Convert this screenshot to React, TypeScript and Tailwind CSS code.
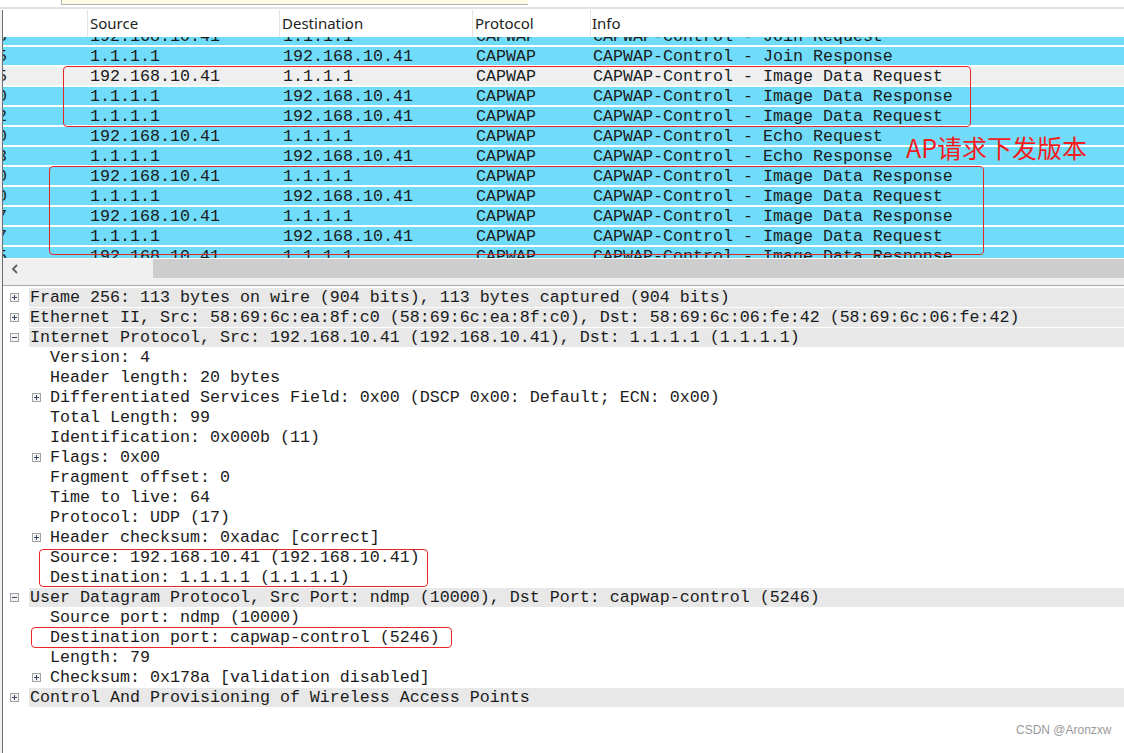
import React from "react";

type Pkt = { n: string; s: string; d: string; i: string; grey?: boolean };

const A = "192.168.10.41";
const B = "1.1.1.1";

const packets: Pkt[] = [
  { n: "5", s: A, d: B, i: "CAPWAP-Control - Join Request" },
  { n: "5", s: B, d: A, i: "CAPWAP-Control - Join Response" },
  { n: "5", s: A, d: B, i: "CAPWAP-Control - Image Data Request", grey: true },
  { n: "0", s: B, d: A, i: "CAPWAP-Control - Image Data Response" },
  { n: "2", s: B, d: A, i: "CAPWAP-Control - Image Data Request" },
  { n: "0", s: A, d: B, i: "CAPWAP-Control - Echo Request" },
  { n: "3", s: B, d: A, i: "CAPWAP-Control - Echo Response" },
  { n: "0", s: A, d: B, i: "CAPWAP-Control - Image Data Response" },
  { n: "0", s: B, d: A, i: "CAPWAP-Control - Image Data Request" },
  { n: "7", s: A, d: B, i: "CAPWAP-Control - Image Data Response" },
  { n: "7", s: B, d: A, i: "CAPWAP-Control - Image Data Request" },
  { n: "5", s: A, d: B, i: "CAPWAP-Control - Image Data Response" },
];

type Node = { text: string; level: 0 | 1; exp?: "plus" | "minus" };

const tree: Node[] = [
  { text: "Frame 256: 113 bytes on wire (904 bits), 113 bytes captured (904 bits)", level: 0, exp: "plus" },
  { text: "Ethernet II, Src: 58:69:6c:ea:8f:c0 (58:69:6c:ea:8f:c0), Dst: 58:69:6c:06:fe:42 (58:69:6c:06:fe:42)", level: 0, exp: "plus" },
  { text: "Internet Protocol, Src: 192.168.10.41 (192.168.10.41), Dst: 1.1.1.1 (1.1.1.1)", level: 0, exp: "minus" },
  { text: "Version: 4", level: 1 },
  { text: "Header length: 20 bytes", level: 1 },
  { text: "Differentiated Services Field: 0x00 (DSCP 0x00: Default; ECN: 0x00)", level: 1, exp: "plus" },
  { text: "Total Length: 99", level: 1 },
  { text: "Identification: 0x000b (11)", level: 1 },
  { text: "Flags: 0x00", level: 1, exp: "plus" },
  { text: "Fragment offset: 0", level: 1 },
  { text: "Time to live: 64", level: 1 },
  { text: "Protocol: UDP (17)", level: 1 },
  { text: "Header checksum: 0xadac [correct]", level: 1, exp: "plus" },
  { text: "Source: 192.168.10.41 (192.168.10.41)", level: 1 },
  { text: "Destination: 1.1.1.1 (1.1.1.1)", level: 1 },
  { text: "User Datagram Protocol, Src Port: ndmp (10000), Dst Port: capwap-control (5246)", level: 0, exp: "minus" },
  { text: "Source port: ndmp (10000)", level: 1 },
  { text: "Destination port: capwap-control (5246)", level: 1 },
  { text: "Length: 79", level: 1 },
  { text: "Checksum: 0x178a [validation disabled]", level: 1, exp: "plus" },
  { text: "Control And Provisioning of Wireless Access Points", level: 0, exp: "plus" },
];

function Expander({ kind }: { kind: "plus" | "minus" }) {
  return (
    <svg width="9" height="9" viewBox="0 0 9 9" className="shrink-0 block">
      <rect x="0.5" y="0.5" width="8" height="8" fill="#f3f3f3" stroke="#a3a3a3" />
      <path d="M2 4.5h5" stroke="#3b4660" strokeWidth="1" />
      {kind === "plus" && <path d="M4.5 2v5" stroke="#3b4660" strokeWidth="1" />}
    </svg>
  );
}

const mono = "font-['Liberation_Mono',monospace] text-[16.67px] text-[#1c1c1c]";

export default function App() {
  return (
    <div className="relative w-[1124px] h-[753px] overflow-hidden bg-white">
      {/* toolbar remnant */}
      <div className="h-[7px] flex">
        <div className="ml-[61px] w-[467px] h-[5px] bg-[#fffde3] border-l border-b border-[#b4b4b4]" />
      </div>
      <div className="h-[2px] bg-[#e2e2e2]" />
      <div className="h-[1px] bg-white" />

      <div className="flex">
        <div className="w-[2px] bg-[#f0f0f0] shrink-0" />
        <div className="w-[1px] bg-[#6f6f6f] shrink-0" />
        <div className="flex-1 flex flex-col min-w-0">
          {/* header */}
          <div className="h-[27px] flex bg-white font-['Noto_Sans',sans-serif] text-[15px] text-[#222] items-center">
            <div className="w-[85px] h-full border-r border-[#e3e3e3]" />
            <div className="w-[192px] h-full border-r border-[#e3e3e3] pl-[2px] flex items-center">Source</div>
            <div className="w-[193px] h-full border-r border-[#e3e3e3] pl-[2px] flex items-center">Destination</div>
            <div className="w-[118px] h-full border-r border-[#e3e3e3] pl-[2px] flex items-center">Protocol</div>
            <div className="flex-1 h-full pl-[1px] flex items-center">Info</div>
          </div>

          {/* packet list */}
          <div className="h-[221px] overflow-hidden">
            <div className="-mt-[10px]">
              {packets.map((p, k) => (
                <div
                  key={k}
                  className={`h-[20px] border-b-2 border-white flex items-center whitespace-pre ${mono} ${p.grey ? "bg-[#efefef]" : "bg-[#70dcfa]"}`}
                >
                  <div className="w-[85px] overflow-hidden flex">
                    <span className="-ml-[6px]">{p.n}</span>
                  </div>
                  <div className="w-[192px] pl-[2px]">{p.s}</div>
                  <div className="w-[193px] pl-[3px]">{p.d}</div>
                  <div className="w-[118px] pl-[3px]">CAPWAP</div>
                  <div className="flex-1 pl-[2px]">{p.i}</div>
                </div>
              ))}
            </div>
          </div>
          <div className="h-[1px] bg-white" />
          {/* horizontal scrollbar */}
          <div className="h-[19px] flex bg-[#f0f0f0]">
            <div className="w-[150px] flex items-center pl-[8px]">
              <svg width="8" height="10" viewBox="0 0 8 10">
                <path d="M6 1L2 5l4 4" fill="none" stroke="#606060" strokeWidth="1.8" />
              </svg>
            </div>
            <div className="flex-1 bg-[#cdcdcd]" />
          </div>
          <div className="h-[7px] bg-[#f0f0f0]" />
          <div className="h-[1px] bg-[#a9a9a9]" />
          <div className="h-[1px] bg-white" />

          {/* details tree */}
          <div className={`${mono} whitespace-pre`}>
            {tree.map((n, k) =>
              n.level === 0 ? (
                <div key={k} className="h-[20px] flex">
                  <div className="w-[26px] shrink-0 flex items-center pl-[7px] pt-[1px]">
                    {n.exp && <Expander kind={n.exp} />}
                  </div>
                  <div className="flex-1 mt-[1px] h-[19px] bg-[#e8e8e8] flex items-center pl-[1px]">{n.text}</div>
                </div>
              ) : (
                <div key={k} className="h-[20px] flex items-center">
                  <div className="w-[47px] shrink-0 flex items-center pl-[29px] pt-[1px]">
                    {n.exp && <Expander kind={n.exp} />}
                  </div>
                  <div>{n.text}</div>
                </div>
              )
            )}
          </div>
          <div className="h-[46px] bg-white" />
        </div>
      </div>

      {/* annotations */}
      <div className="absolute left-[63px] top-[66px] w-[908px] h-[61px] border border-[#e8262a] rounded-[4px]" />
      <div className="absolute left-[49px] top-[166px] w-[935px] h-[89px] border border-[#e8262a] rounded-[4px]" />
      <div className="absolute left-[39px] top-[549px] w-[389px] h-[38px] border border-[#e8262a] rounded-[4px]" />
      <div className="absolute left-[31px] top-[627px] w-[421px] h-[21px] border border-[#e8262a] rounded-[4px]" />
      <div className="absolute left-[906px] top-[132px] text-[25px] leading-[30px] text-[#f21d1d] font-['Noto_Sans_CJK_SC',sans-serif] whitespace-nowrap">
        AP请求下发版本
      </div>
      <div className="absolute left-[1016px] top-[722px] text-[12px] leading-[16px] text-[#9a9a9a] font-['Liberation_Sans',sans-serif] whitespace-nowrap">
        CSDN @Aronzxw
      </div>
    </div>
  );
}
